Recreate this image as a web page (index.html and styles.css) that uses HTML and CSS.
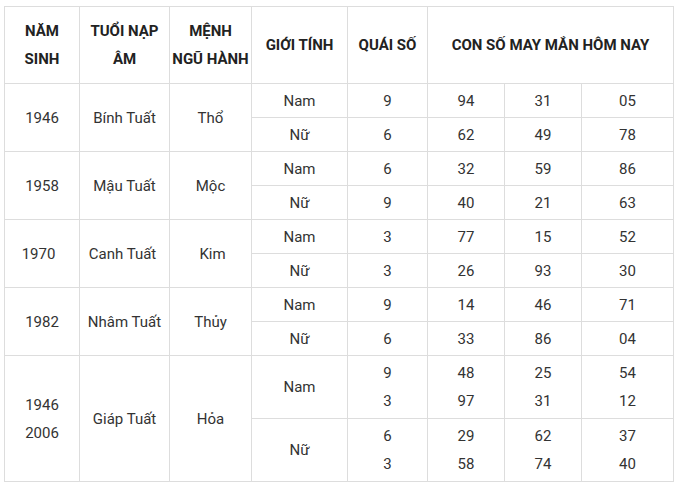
FILE: index.html
```html
<!DOCTYPE html>
<html lang="vi">
<head>
<meta charset="utf-8">
<link rel="stylesheet" href="styles.css">
</head>
<body>
<table class="tbl">
  <colgroup>
    <col class="c1"><col class="c2"><col class="c3"><col class="c4"><col class="c5"><col class="c6"><col class="c7"><col class="c8">
  </colgroup>
  <thead>
    <tr class="head">
      <th>NĂM<br>SINH</th>
      <th>TUỔI NẠP<br>ÂM</th>
      <th>MỆNH<br>NGŨ HÀNH</th>
      <th>GIỚI TÍNH</th>
      <th>QUÁI SỐ</th>
      <th colspan="3">CON SỐ MAY MẮN HÔM NAY</th>
    </tr>
  </thead>
  <tbody>
    <tr class="r"><td rowspan="2">1946</td><td rowspan="2">Bính Tuất</td><td rowspan="2">Thổ</td><td>Nam</td><td>9</td><td>94</td><td>31</td><td>05</td></tr>
    <tr class="r"><td>Nữ</td><td>6</td><td>62</td><td>49</td><td>78</td></tr>
    <tr class="r"><td rowspan="2">1958</td><td rowspan="2">Mậu Tuất</td><td rowspan="2">Mộc</td><td>Nam</td><td>6</td><td>32</td><td>59</td><td>86</td></tr>
    <tr class="r"><td>Nữ</td><td>9</td><td>40</td><td>21</td><td>63</td></tr>
    <tr class="r"><td rowspan="2" class="l1970">1970</td><td rowspan="2" class="lcanh">Canh Tuất</td><td rowspan="2" class="rkim">Kim</td><td>Nam</td><td>3</td><td>77</td><td>15</td><td>52</td></tr>
    <tr class="r"><td>Nữ</td><td>3</td><td>26</td><td>93</td><td>30</td></tr>
    <tr class="r"><td rowspan="2">1982</td><td rowspan="2">Nhâm Tuất</td><td rowspan="2">Thủy</td><td>Nam</td><td>9</td><td>14</td><td>46</td><td>71</td></tr>
    <tr class="r"><td>Nữ</td><td>6</td><td>33</td><td>86</td><td>04</td></tr>
    <tr class="r2"><td rowspan="2">1946<br>2006</td><td rowspan="2">Giáp Tuất</td><td rowspan="2">Hỏa</td><td>Nam</td><td>9<br>3</td><td>48<br>97</td><td>25<br>31</td><td>54<br>12</td></tr>
    <tr class="r2"><td>Nữ</td><td>6<br>3</td><td>29<br>58</td><td>62<br>74</td><td>37<br>40</td></tr>
  </tbody>
</table>
</body>
</html>
```
FILE: styles.css
```css
html, body {
  margin: 0;
  padding: 0;
  background: #ffffff;
}
body {
  padding: 6px 0 0 4px;
  font-family: Roboto, "Liberation Sans", Arial, sans-serif;
  color: #333333;
}
.tbl {
  border-collapse: collapse;
  table-layout: fixed;
  width: 669px;
  font-size: 15px;
}
.c1 { width: 75px; }
.c2 { width: 90px; }
.c3 { width: 82px; }
.c4 { width: 96px; }
.c5 { width: 80px; }
.c6 { width: 77px; }
.c7 { width: 77px; }
.c8 { width: 92px; }
.tbl th, .tbl td {
  border: 1px solid #dddddd;
  text-align: center;
  vertical-align: middle;
  padding: 0 2px;
  line-height: 28px;
}
.tbl th {
  font-weight: 700;
  color: #222222;
}
.head { height: 77px; }
.r { height: 34px; }
.r2 { height: 63px; }
.tbl td.l1970 { padding-right: 9px; }
.tbl td.lcanh { padding-right: 6px; }
.tbl td.rkim { padding-left: 6px; }
```
